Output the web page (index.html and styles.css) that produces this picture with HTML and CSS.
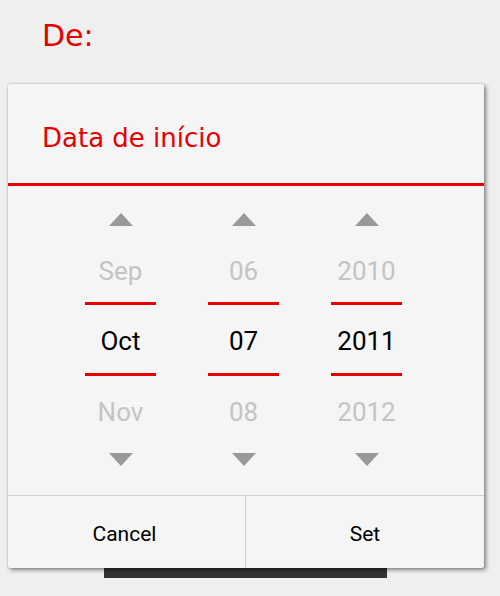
FILE: index.html
```html
<!DOCTYPE html>
<html>
<head>
<meta charset="utf-8">
<link rel="stylesheet" href="styles.css">
</head>
<body>
<div class="label">De:</div>
<div class="dialog">
  <div class="title">Data de início</div>
  <div class="title-rule"></div>
  <div class="picker">
    <div class="col">
      <div class="arrow-box up"><span class="tri tri-up"></span></div>
      <div class="item item-first faded">Sep</div>
      <div class="rule"></div>
      <div class="item current">Oct</div>
      <div class="rule"></div>
      <div class="item faded">Nov</div>
      <div class="arrow-box down"><span class="tri tri-down"></span></div>
    </div>
    <div class="col">
      <div class="arrow-box up"><span class="tri tri-up"></span></div>
      <div class="item item-first faded">06</div>
      <div class="rule"></div>
      <div class="item current">07</div>
      <div class="rule"></div>
      <div class="item faded">08</div>
      <div class="arrow-box down"><span class="tri tri-down"></span></div>
    </div>
    <div class="col">
      <div class="arrow-box up"><span class="tri tri-up"></span></div>
      <div class="item item-first faded">2010</div>
      <div class="rule"></div>
      <div class="item current">2011</div>
      <div class="rule"></div>
      <div class="item faded">2012</div>
      <div class="arrow-box down"><span class="tri tri-down"></span></div>
    </div>
  </div>
  <div class="buttons">
    <div class="btn btn-left">Cancel</div>
    <div class="btn">Set</div>
  </div>
</div>
<div class="under-bar"></div>
</body>
</html>
```

FILE: styles.css
```css
html, body {
  margin: 0;
  padding: 0;
}
body {
  background: #efefef;
  width: 500px;
  height: 596px;
  overflow: hidden;
}
.label {
  height: 84px;
  box-sizing: border-box;
  padding: 0 0 13px 42px;
  display: flex;
  align-items: center;
  font-family: "DejaVu Sans", sans-serif;
  font-size: 30px;
  color: #e60000;
}
.dialog {
  position: relative;
  z-index: 2;
  margin-left: 8px;
  width: 476px;
  height: 484px;
  background: #f5f5f5;
  border-radius: 2px;
  box-shadow: 2px 2px 4px rgba(0, 0, 0, 0.45), 0 0 2px rgba(0, 0, 0, 0.25);
  display: flex;
  flex-direction: column;
}
.title {
  height: 99px;
  box-sizing: border-box;
  padding: 9px 0 0 34px;
  display: flex;
  align-items: center;
  font-family: "DejaVu Sans", sans-serif;
  font-size: 26px;
  color: #e60000;
}
.title-rule {
  height: 3px;
  background: #e60000;
}
.picker {
  height: 309px;
  box-sizing: border-box;
  padding-left: 77px;
  display: grid;
  grid-template-columns: 71px 71px 71px;
  column-gap: 52px;
}
.col {
  display: flex;
  flex-direction: column;
  align-items: stretch;
}
.arrow-box {
  display: flex;
  justify-content: center;
}
.arrow-box.up {
  height: 50px;
  padding-top: 27px;
  box-sizing: border-box;
}
.arrow-box.down {
  height: 51px;
  padding-top: 9px;
  box-sizing: border-box;
}
.tri {
  display: block;
  width: 0;
  height: 0;
  border-left: 12px solid transparent;
  border-right: 12px solid transparent;
}
.tri-up {
  border-bottom: 13px solid #999999;
}
.tri-down {
  border-top: 13px solid #999999;
}
.item {
  height: 68px;
  box-sizing: border-box;
  padding-top: 3px;
  display: flex;
  align-items: center;
  justify-content: center;
  font-family: Roboto, sans-serif;
  font-size: 26px;
}
.item-first {
  height: 66px;
}
.faded {
  color: #c4c4c4;
}
.current {
  color: #000000;
}
.rule {
  height: 3px;
  background: #e60000;
}
.buttons {
  flex: 1;
  border-top: 1px solid #d0d0d0;
  display: grid;
  grid-template-columns: 238px 1fr;
}
.btn {
  box-sizing: border-box;
  padding-top: 3px;
  display: flex;
  align-items: center;
  justify-content: center;
  font-family: Roboto, sans-serif;
  font-size: 21px;
  color: #000000;
}
.btn-left {
  border-right: 1px solid #d0d0d0;
  padding-right: 4px;
}
.under-bar {
  position: relative;
  z-index: 1;
  margin-left: 104px;
  width: 283px;
  height: 10px;
  background: #333333;
}
```
